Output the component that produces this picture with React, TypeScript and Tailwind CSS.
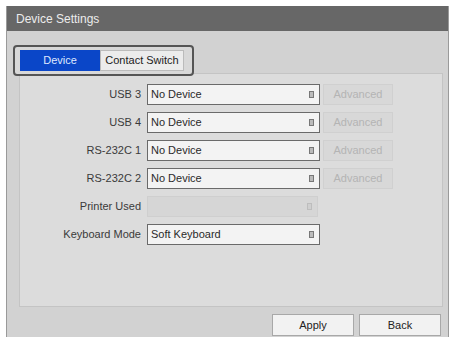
const rows = [
  { label: "USB 3", value: "No Device", advanced: true },
  { label: "USB 4", value: "No Device", advanced: true },
  { label: "RS-232C 1", value: "No Device", advanced: true },
  { label: "RS-232C 2", value: "No Device", advanced: true },
  { label: "Printer Used", value: "", disabled: true },
  { label: "Keyboard Mode", value: "Soft Keyboard" },
];

function SelectBox({ value, disabled }: { value: string; disabled?: boolean }) {
  return (
    <div
      className={
        disabled
          ? "flex h-[21px] w-[171px] items-center justify-between border border-[#cfcfcf] bg-[#d6d6d6] px-[3px]"
          : "flex h-[21px] w-[173px] items-center justify-between border border-[#6a6a6a] bg-[#f3f3f3] px-[3px]"
      }
    >
      <span className="text-[11px] text-[#2a2a2a]">{value}</span>
      <span
        className={
          disabled
            ? "mr-[2px] h-[7px] w-[5px] border border-[#bdbdbd] bg-[#cfcfcf]"
            : "mr-[2px] h-[7px] w-[5px] border border-[#777] bg-[#bbb]"
        }
      />
    </div>
  );
}

export default function App() {
  return (
    <div
      className="h-[337px] w-[451px] overflow-hidden bg-white pl-[6px] pt-[6px]"
      style={{ fontFamily: '"Liberation Sans", Arial, sans-serif' }}
    >
      <div className="flex h-[340px] w-[443px] flex-col border-x border-[#9a9a9a] bg-[#d2d2d2]">
        {/* title bar */}
        <div className="flex h-[25px] items-center bg-[#676767] pl-[9px] text-[12px] text-[#ececec]">
          Device Settings
        </div>

        {/* tabs */}
        <div className="relative z-10 ml-[6px] mt-[14px] flex h-[31px] w-[181px] items-center rounded-[4px] border-2 border-[#555] bg-[#d8d8d8] pl-[5px]">
          <div className="flex h-[21px] w-[80px] items-center justify-center bg-[#0a46c8] text-[11px] text-[#dfe8ff]">
            Device
          </div>
          <div className="flex h-[21px] w-[84px] items-center justify-center border border-[#bbb] bg-[#ececec] text-[11px] text-[#222]">
            Contact Switch
          </div>
        </div>

        {/* panel */}
        <div className="ml-[12px] mt-[-3px] flex h-[234px] w-[424px] flex-col gap-[7px] border border-[#c4c4c4] bg-[#dcdcdc] pt-[10px]">
          {rows.map((r) => (
            <div key={r.label} className="flex items-center">
              <div className="w-[121px] text-right text-[11px] text-[#3a3a3a]">{r.label}</div>
              <div className="ml-[6px]">
                <SelectBox value={r.value} disabled={r.disabled} />
              </div>
              {r.advanced && (
                <div className="ml-[3px] flex h-[21px] w-[70px] items-center justify-center border border-[#d0d0d0] bg-[#d8d8d8] text-[11px] text-[#b4b4b4]">
                  Advanced
                </div>
              )}
            </div>
          ))}
        </div>

        {/* buttons */}
        <div className="mr-[7px] mt-[7px] flex justify-end gap-[5px]">
          <div className="flex h-[22px] w-[82px] items-center justify-center border border-[#a8a8a8] bg-[#f2f2f2] text-[11px] text-[#222]">
            Apply
          </div>
          <div className="flex h-[22px] w-[82px] items-center justify-center border border-[#a8a8a8] bg-[#f2f2f2] text-[11px] text-[#222]">
            Back
          </div>
        </div>
      </div>
    </div>
  );
}
